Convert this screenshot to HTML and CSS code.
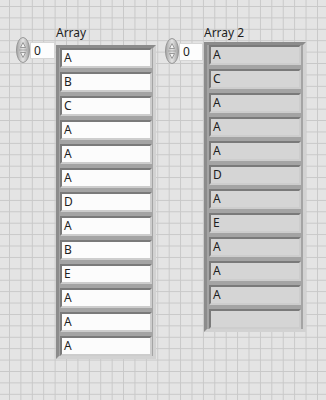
FILE: index.html
```html
<!DOCTYPE html>
<html>
<head>
    <title>Front Panel</title>
    <meta charset="UTF-8">
    <link rel="stylesheet" href="styles.css">
</head>
<body>
    <div class="panel">
        <div class="array-ctl first">
            <div class="index">
                <svg class="spin" width="14" height="26" viewBox="0 0 14 26">
                    <defs>
                        <linearGradient id="sg1" x1="0" y1="0" x2="1" y2="0">
                            <stop offset="0" stop-color="#a4a4a4"/>
                            <stop offset="0.5" stop-color="#e4e4e4"/>
                            <stop offset="1" stop-color="#9e9e9e"/>
                        </linearGradient>
                    </defs>
                    <ellipse cx="7" cy="13" rx="6.5" ry="12.5" fill="url(#sg1)" stroke="#969696"/>
                    <path d="M4.5 10.5 L7 5.5 L9.5 10.5 Z" fill="#f4f4f4" stroke="#858585" stroke-width="0.8"/>
                    <path d="M3 13 H11" stroke="#999" stroke-width="0.8"/>
                    <path d="M4.5 15.5 L7 20.5 L9.5 15.5 Z" fill="#f4f4f4" stroke="#858585" stroke-width="0.8"/>
                </svg>
                <div class="num">0</div>
            </div>
            <div class="array">
                <div class="label">Array</div>
                <div class="frame">
                    <div class="cell">A</div>
                    <div class="cell">B</div>
                    <div class="cell">C</div>
                    <div class="cell">A</div>
                    <div class="cell">A</div>
                    <div class="cell">A</div>
                    <div class="cell">D</div>
                    <div class="cell">A</div>
                    <div class="cell">B</div>
                    <div class="cell">E</div>
                    <div class="cell">A</div>
                    <div class="cell">A</div>
                    <div class="cell">A</div>
                </div>
            </div>
        </div>

        <div class="array-ctl second">
            <div class="index">
                <svg class="spin" width="14" height="26" viewBox="0 0 14 26">
                    <defs>
                        <linearGradient id="sg2" x1="0" y1="0" x2="1" y2="0">
                            <stop offset="0" stop-color="#a4a4a4"/>
                            <stop offset="0.5" stop-color="#e4e4e4"/>
                            <stop offset="1" stop-color="#9e9e9e"/>
                        </linearGradient>
                    </defs>
                    <ellipse cx="7" cy="13" rx="6.5" ry="12.5" fill="url(#sg2)" stroke="#969696"/>
                    <path d="M4.5 10.5 L7 5.5 L9.5 10.5 Z" fill="#f4f4f4" stroke="#858585" stroke-width="0.8"/>
                    <path d="M3 13 H11" stroke="#999" stroke-width="0.8"/>
                    <path d="M4.5 15.5 L7 20.5 L9.5 15.5 Z" fill="#f4f4f4" stroke="#858585" stroke-width="0.8"/>
                </svg>
                <div class="num">0</div>
            </div>
            <div class="array">
                <div class="label">Array 2</div>
                <div class="frame indicator">
                    <div class="cell">A</div>
                    <div class="cell">C</div>
                    <div class="cell">A</div>
                    <div class="cell">A</div>
                    <div class="cell">A</div>
                    <div class="cell">D</div>
                    <div class="cell">A</div>
                    <div class="cell">E</div>
                    <div class="cell">A</div>
                    <div class="cell">A</div>
                    <div class="cell">A</div>
                    <div class="cell"></div>
                </div>
            </div>
        </div>
    </div>
</body>
</html>
```

FILE: styles.css
```css
body {
    margin: 0;
    height: 400px;
    font-family: "Noto Sans", "Open Sans", sans-serif;
    font-size: 12px;
    color: #1e1e1e;
    background-color: #e4e4e4;
    background-image:
        linear-gradient(to right, #c8c8c8 1px, transparent 1px),
        linear-gradient(to bottom, #c8c8c8 1px, transparent 1px);
    background-size: 11.42px 11.42px;
    background-position: 9px 6px;
}
.panel {
    display: flex;
    align-items: flex-start;
    padding: 26px 0 0 16px;
}
.array-ctl {
    display: flex;
    align-items: flex-start;
}
.second {
    margin-left: 9px;
}
.index {
    display: flex;
    align-items: flex-start;
    margin-top: 11px;
}
.second .index {
    margin-top: 12px;
}
.spin {
    display: block;
}
.num {
    width: 25px;
    height: 17px;
    margin-top: 5px;
    box-sizing: border-box;
    padding-left: 3px;
    background-color: #fdfdfd;
    border: 1px solid #d6d6d6;
    line-height: 15px;
}
.second .num {
    width: 24px;
    height: 18px;
}
.array {
    margin-left: 1px;
}
.label {
    height: 19px;
    line-height: 14px;
}
.second .label {
    height: 16px;
}
.frame {
    width: 100px;
    box-sizing: border-box;
    padding: 0 1px;
    border: 3px solid;
    border-color: #8c8c8c #d2d2d2 #d2d2d2 #8c8c8c;
    background-color: #a4a4a4;
}
.frame.indicator {
    width: 102px;
    padding: 0 2px;
}
.cell {
    height: 20px;
    box-sizing: border-box;
    margin-bottom: 4px;
    padding-left: 2px;
    border: 2px solid;
    border-color: #7a7a7a #cdcdcd #cdcdcd #7a7a7a;
    background-color: #fcfcfc;
    line-height: 16px;
}
.cell:last-child {
    margin-bottom: 0;
}
.indicator .cell {
    background-color: #d5d5d5;
}
```
